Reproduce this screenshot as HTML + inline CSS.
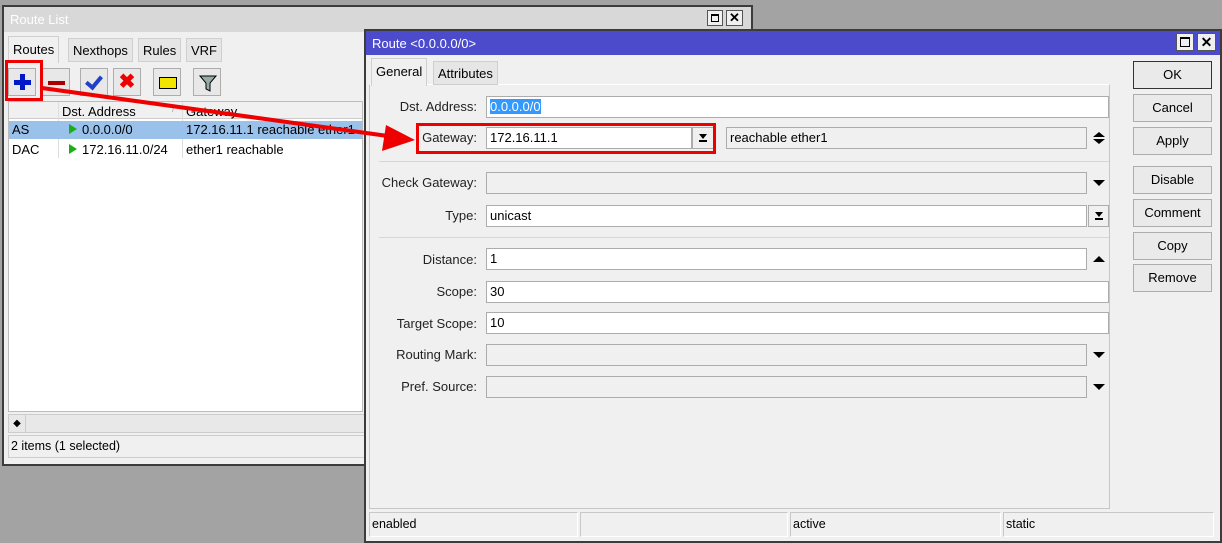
<!DOCTYPE html>
<html><head><meta charset="utf-8"><style>
*{box-sizing:border-box;margin:0;padding:0}
body{width:1222px;height:543px;background:#a3a3a3;position:relative;overflow:hidden;font-family:"Liberation Sans",sans-serif;font-size:12px;color:#000}
.a{position:absolute}
.win{background:#f0f0f0;border:2px solid #3c3c3c}
.btn{position:absolute;background:#eaeaea;border:1px solid #adadad;text-align:center;line-height:25px;font-size:13px}
.lbl{position:absolute;text-align:right;width:140px;font-size:13px;color:#222}
.fld{position:absolute;background:#fff;border:1px solid #acacac;height:22px;line-height:20px;padding-left:3px;font-size:13px}
.dis{background:#f0f0f0}
.tri{position:absolute;width:0;height:0}
.sb{position:absolute;top:512px;height:25px;border:1px solid #c8c8c8;border-right-color:#fff;border-bottom-color:#fff;padding:4px 0 0 2px;font-size:12.5px}
.tab{position:absolute;background:#e6e6e6;border:1px solid #cfcfcf;font-size:13px;padding:0 4px;line-height:24px}
.tbi{position:absolute;top:68px;width:28px;height:28px;border:1px solid #adadad;background:#e8e8e8}
.dd{position:absolute;background:#f0f0f0;border:1px solid #acacac;height:22px}
.dd i{position:absolute;left:50%;margin-left:-4px;top:6px;width:0;height:0;border-top:5px solid #000;border-left:4px solid transparent;border-right:4px solid transparent}
.dd b{position:absolute;left:50%;margin-left:-4px;top:12px;width:8px;height:2px;background:#000}
</style></head><body>

<div class="a win" style="left:2px;top:5px;width:751px;height:461px"></div>
<div class="a" style="left:4px;top:7px;width:747px;height:25px;background:#d8d8d8;color:#fff;font-size:13px;padding:5px 0 0 6px">Route List</div>
<div class="a" style="left:707px;top:10px;width:16px;height:16px;border:1px solid #555;background:#f0f0f0"><div class="a" style="left:3px;top:3px;width:8px;height:8px;border:1px solid #000;border-top-width:2px"></div></div>
<div class="a" style="left:726px;top:10px;width:17px;height:16px;border:1px solid #555;background:#f0f0f0;font-size:13px;font-weight:bold;text-align:center;line-height:14px">✕</div>
<div class="tab" style="left:8px;top:36px;height:27px;background:#f0f0f0;border-bottom:none;line-height:25px">Routes</div>
<div class="tab" style="left:68px;top:38px;height:24px">Nexthops</div>
<div class="tab" style="left:138px;top:38px;height:24px">Rules</div>
<div class="tab" style="left:186px;top:38px;height:24px">VRF</div>
<div class="tbi" style="left:8px"><div class="a" style="left:11px;top:5px;width:5px;height:16px;background:#0018c8"></div><div class="a" style="left:5px;top:11px;width:17px;height:5px;background:#0018c8"></div></div>
<div class="tbi" style="left:42px"><div class="a" style="left:5px;top:12px;width:17px;height:4px;background:#a00"></div></div>
<div class="tbi" style="left:80px"><div class="a" style="left:8px;top:4px;width:10px;height:16px;border-right:4px solid #2040c8;border-bottom:4px solid #2040c8;transform:rotate(40deg)"></div></div>
<div class="tbi" style="left:113px;color:#e00;font-weight:bold;font-size:20px;text-align:center;line-height:26px">✖</div>
<div class="tbi" style="left:153px"><div class="a" style="left:5px;top:8px;width:18px;height:12px;background:#f0e600;border:1px solid #000"></div></div>
<div class="tbi" style="left:193px"><svg class="a" style="left:5px;top:5px" width="18" height="18"><path d="M1 2h16l-6 7v8l-4-2v-6z" fill="#9aa" stroke="#000"/></svg></div>
<div class="a" style="left:8px;top:101px;width:355px;height:311px;background:#fff;border:1px solid #bbb;overflow:hidden">
<div class="a" style="left:0;top:0;width:354px;height:17px;background:#f0f0f0;border-bottom:1px solid #ccc"></div>
<div class="a" style="left:49px;top:0;width:1px;height:56px;background:#ddd"></div>
<div class="a" style="left:173px;top:0;width:1px;height:56px;background:#ddd"></div>
<div class="a" style="left:53px;top:2px;font-size:13px">Dst. Address</div>
<div class="a" style="left:163px;top:2px;font-size:10px;color:#aaa">/</div>
<div class="a" style="left:177px;top:2px;font-size:13px">Gateway</div>
<div class="a" style="left:0;top:19px;width:354px;height:18px;background:#99c1ea"></div>
<div class="a" style="left:3px;top:20px;font-size:13px">AS</div>
<div class="a" style="left:3px;top:40px;font-size:13px">DAC</div>
<div class="tri" style="left:60px;top:22px;border-left:8px solid #18b018;border-top:5px solid transparent;border-bottom:5px solid transparent"></div>
<div class="tri" style="left:60px;top:42px;border-left:8px solid #18b018;border-top:5px solid transparent;border-bottom:5px solid transparent"></div>
<div class="a" style="left:73px;top:20px;font-size:13px">0.0.0.0/0</div>
<div class="a" style="left:73px;top:40px;font-size:13px">172.16.11.0/24</div>
<div class="a" style="left:177px;top:20px;font-size:13px;white-space:nowrap">172.16.11.1 reachable ether1</div>
<div class="a" style="left:177px;top:40px;font-size:13px">ether1 reachable</div>
</div>
<div class="a" style="left:8px;top:414px;width:358px;height:19px;background:#e8e8e8;border:1px solid #ccc"></div>
<div class="a" style="left:8px;top:414px;width:18px;height:19px;border:1px solid #ccc;font-size:10px;text-align:center;line-height:17px">◆</div>
<div class="a" style="left:8px;top:435px;width:358px;height:23px;border:1px solid #ccc"></div>
<div class="a" style="left:11px;top:439px;font-size:12.5px">2 items (1 selected)</div>

<div class="a win" style="left:364px;top:29px;width:858px;height:514px"></div>
<div class="a" style="left:366px;top:31px;width:854px;height:24px;background:#4b4bcc;color:#fff;font-size:13px;padding:5px 0 0 6px">Route &lt;0.0.0.0/0&gt;</div>
<div class="a" style="left:1176px;top:33px;width:18px;height:18px;border:1px solid #555;background:#f0f0f0"><div class="a" style="left:3px;top:3px;width:10px;height:10px;border:1px solid #000;border-top-width:2px"></div></div>
<div class="a" style="left:1197px;top:33px;width:19px;height:18px;border:1px solid #555;background:#f0f0f0;font-size:14px;font-weight:bold;text-align:center;line-height:16px">✕</div>
<div class="a" style="left:369px;top:84px;width:741px;height:425px;border:1px solid #c6c6c6;border-top-color:#fff"></div>
<div class="tab" style="left:371px;top:58px;height:28px;background:#f0f0f0;border-bottom:none;line-height:26px">General</div>
<div class="tab" style="left:433px;top:61px;height:24px">Attributes</div>

<div class="lbl" style="left:337px;top:99px">Dst. Address:</div>
<div class="fld" style="left:486px;top:96px;width:623px"><span style="background:#3399ff;color:#fff">0.0.0.0/0</span></div>
<div class="lbl" style="left:337px;top:130px">Gateway:</div>
<div class="fld" style="left:486px;top:127px;width:206px">172.16.11.1</div>
<div class="dd" style="left:692px;top:127px;width:22px"><i></i><b></b></div>
<div class="fld dis" style="left:726px;top:127px;width:361px">reachable ether1</div>
<div class="tri" style="left:1093px;top:132px;border-bottom:5px solid #000;border-left:6px solid transparent;border-right:6px solid transparent"></div>
<div class="tri" style="left:1093px;top:139px;border-top:5px solid #000;border-left:6px solid transparent;border-right:6px solid transparent"></div>
<div class="a" style="left:379px;top:161px;width:730px;height:1px;background:#d6d6d6"></div>
<div class="lbl" style="left:337px;top:175px">Check Gateway:</div>
<div class="fld dis" style="left:486px;top:172px;width:601px"></div>
<div class="tri" style="left:1093px;top:180px;border-top:6px solid #000;border-left:6px solid transparent;border-right:6px solid transparent"></div>
<div class="lbl" style="left:337px;top:208px">Type:</div>
<div class="fld" style="left:486px;top:205px;width:601px">unicast</div>
<div class="dd" style="left:1088px;top:205px;width:21px"><i></i><b></b></div>
<div class="a" style="left:379px;top:237px;width:730px;height:1px;background:#d6d6d6"></div>
<div class="lbl" style="left:337px;top:252px">Distance:</div>
<div class="fld" style="left:486px;top:248px;width:601px">1</div>
<div class="tri" style="left:1093px;top:256px;border-bottom:6px solid #000;border-left:6px solid transparent;border-right:6px solid transparent"></div>
<div class="lbl" style="left:337px;top:284px">Scope:</div>
<div class="fld" style="left:486px;top:281px;width:623px">30</div>
<div class="lbl" style="left:337px;top:316px">Target Scope:</div>
<div class="fld" style="left:486px;top:312px;width:623px">10</div>
<div class="lbl" style="left:337px;top:347px">Routing Mark:</div>
<div class="fld dis" style="left:486px;top:344px;width:601px"></div>
<div class="tri" style="left:1093px;top:352px;border-top:6px solid #000;border-left:6px solid transparent;border-right:6px solid transparent"></div>
<div class="lbl" style="left:337px;top:379px">Pref. Source:</div>
<div class="fld dis" style="left:486px;top:376px;width:601px"></div>
<div class="tri" style="left:1093px;top:384px;border-top:6px solid #000;border-left:6px solid transparent;border-right:6px solid transparent"></div>

<div class="btn" style="left:1133px;top:61px;width:79px;height:28px;border-color:#333">OK</div>
<div class="btn" style="left:1133px;top:94px;width:79px;height:28px">Cancel</div>
<div class="btn" style="left:1133px;top:127px;width:79px;height:28px">Apply</div>
<div class="btn" style="left:1133px;top:166px;width:79px;height:28px">Disable</div>
<div class="btn" style="left:1133px;top:199px;width:79px;height:28px">Comment</div>
<div class="btn" style="left:1133px;top:232px;width:79px;height:28px">Copy</div>
<div class="btn" style="left:1133px;top:264px;width:79px;height:28px">Remove</div>

<div class="sb" style="left:369px;width:209px">enabled</div>
<div class="sb" style="left:580px;width:208px"></div>
<div class="sb" style="left:790px;width:211px">active</div>
<div class="sb" style="left:1003px;width:211px">static</div>

<div class="a" style="left:5px;top:60px;width:38px;height:41px;border:3px solid #e00"></div>
<div class="a" style="left:416px;top:123px;width:300px;height:31px;border:3px solid #e00"></div>
<svg class="a" style="left:0;top:0" width="1222" height="543"><line x1="42" y1="88" x2="395" y2="137" stroke="#e00" stroke-width="4"/><path d="M415 140 L386 125 L382 151 Z" fill="#e00"/></svg>
</body></html>
